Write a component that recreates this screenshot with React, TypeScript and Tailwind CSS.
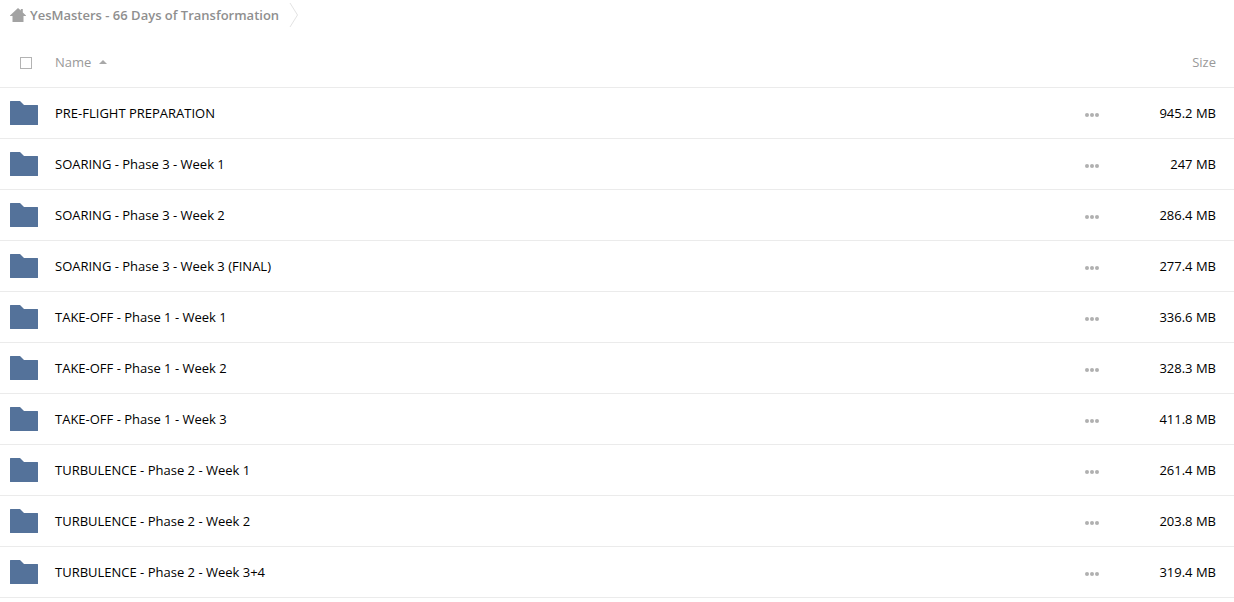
import { useState } from 'react';

interface Folder {
  name: string;
  size: string;
}

const folders: Folder[] = [
  { name: 'PRE-FLIGHT PREPARATION', size: '945.2 MB' },
  { name: 'SOARING - Phase 3 - Week 1', size: '247 MB' },
  { name: 'SOARING - Phase 3 - Week 2', size: '286.4 MB' },
  { name: 'SOARING - Phase 3 - Week 3 (FINAL)', size: '277.4 MB' },
  { name: 'TAKE-OFF - Phase 1 - Week 1', size: '336.6 MB' },
  { name: 'TAKE-OFF - Phase 1 - Week 2', size: '328.3 MB' },
  { name: 'TAKE-OFF - Phase 1 - Week 3', size: '411.8 MB' },
  { name: 'TURBULENCE - Phase 2 - Week 1', size: '261.4 MB' },
  { name: 'TURBULENCE - Phase 2 - Week 2', size: '203.8 MB' },
  { name: 'TURBULENCE - Phase 2 - Week 3+4', size: '319.4 MB' },
];

function HomeIcon() {
  return (
    <svg width="16" height="14" viewBox="0 0 16 14" fill="#a3a3a3" aria-hidden="true">
      <path d="M8 0l2.8 2.6V1h2v3.4L16 7.4V8h-2.5v6h-11V8H0v-.6z" />
    </svg>
  );
}

function FolderIcon() {
  return (
    <svg className="block" width="28" height="24" viewBox="0 0 28 24" fill="#54729a" aria-hidden="true">
      <path d="M.5 0H10l4 4h13.5a.5.5 0 0 1 .5.5v19a.5.5 0 0 1-.5.5H.5a.5.5 0 0 1-.5-.5V.5A.5.5 0 0 1 .5 0z" />
    </svg>
  );
}

function DotsIcon() {
  return (
    <svg width="14" height="4" viewBox="0 0 14 4" fill="#b0b0b0" aria-hidden="true">
      <circle cx="2" cy="2" r="2" />
      <circle cx="7" cy="2" r="2" />
      <circle cx="12" cy="2" r="2" />
    </svg>
  );
}

function App() {
  const [allSelected, setAllSelected] = useState(false);
  const [ascending, setAscending] = useState(true);

  const rows = ascending ? folders : [...folders].reverse();

  return (
    <div className="min-h-screen bg-white font-['Open_Sans',sans-serif] text-[13px] leading-5 text-black">
      {/* Breadcrumb */}
      <nav aria-label="Breadcrumb" className="flex h-[30px] items-center gap-[10px] pl-[10px]">
        <a href="#" className="flex items-center gap-1 font-semibold text-[#8f8f8f]">
          <HomeIcon />
          YesMasters - 66 Days of Transformation
        </a>
        <svg width="10" height="26" viewBox="0 0 10 26" fill="none" stroke="#e3e3e3" aria-hidden="true">
          <path d="M1 1l7.5 12L1 25" />
        </svg>
      </nav>

      {/* Folder list */}
      <table className="mt-[7px] w-full border-separate border-spacing-0">
        <thead>
          <tr className="h-[51px] text-[#999999]">
            <th className="w-[55px] border-b border-[#ebebeb] pt-0.5 pl-5 text-left">
              <input
                type="checkbox"
                aria-label="Select all"
                checked={allSelected}
                onChange={(e) => setAllSelected(e.target.checked)}
                className="block size-3 appearance-none border border-[#b3b3b3] bg-white checked:bg-[#54729a]"
              />
            </th>
            <th className="border-b border-[#ebebeb] text-left font-normal">
              <button type="button" onClick={() => setAscending(!ascending)} className="flex items-center gap-2">
                Name
                <svg width="8" height="4" viewBox="0 0 8 4" fill="#a8a8a8" aria-hidden="true">
                  <path d={ascending ? 'M4 0l4 4H0z' : 'M0 0h8L4 4z'} />
                </svg>
              </button>
            </th>
            <th className="w-8 border-b border-[#ebebeb]" />
            <th className="w-[126px] border-b border-[#ebebeb] pr-[18px] text-right font-normal">Size</th>
          </tr>
        </thead>
        <tbody>
          {rows.map((folder) => (
            <tr key={folder.name} className="h-[51px]">
              <td className="border-b border-[#ebebeb] pl-[10px]">
                <FolderIcon />
              </td>
              <td className="border-b border-[#ebebeb]">
                <a href="#">{folder.name}</a>
              </td>
              <td className="border-b border-[#ebebeb]">
                <button type="button" aria-label={`Actions for ${folder.name}`} className="flex h-6 w-full items-center pt-1 pl-[9px]">
                  <DotsIcon />
                </button>
              </td>
              <td className="border-b border-[#ebebeb] pr-[18px] text-right">{folder.size}</td>
            </tr>
          ))}
        </tbody>
      </table>
    </div>
  );
}

export default App;
